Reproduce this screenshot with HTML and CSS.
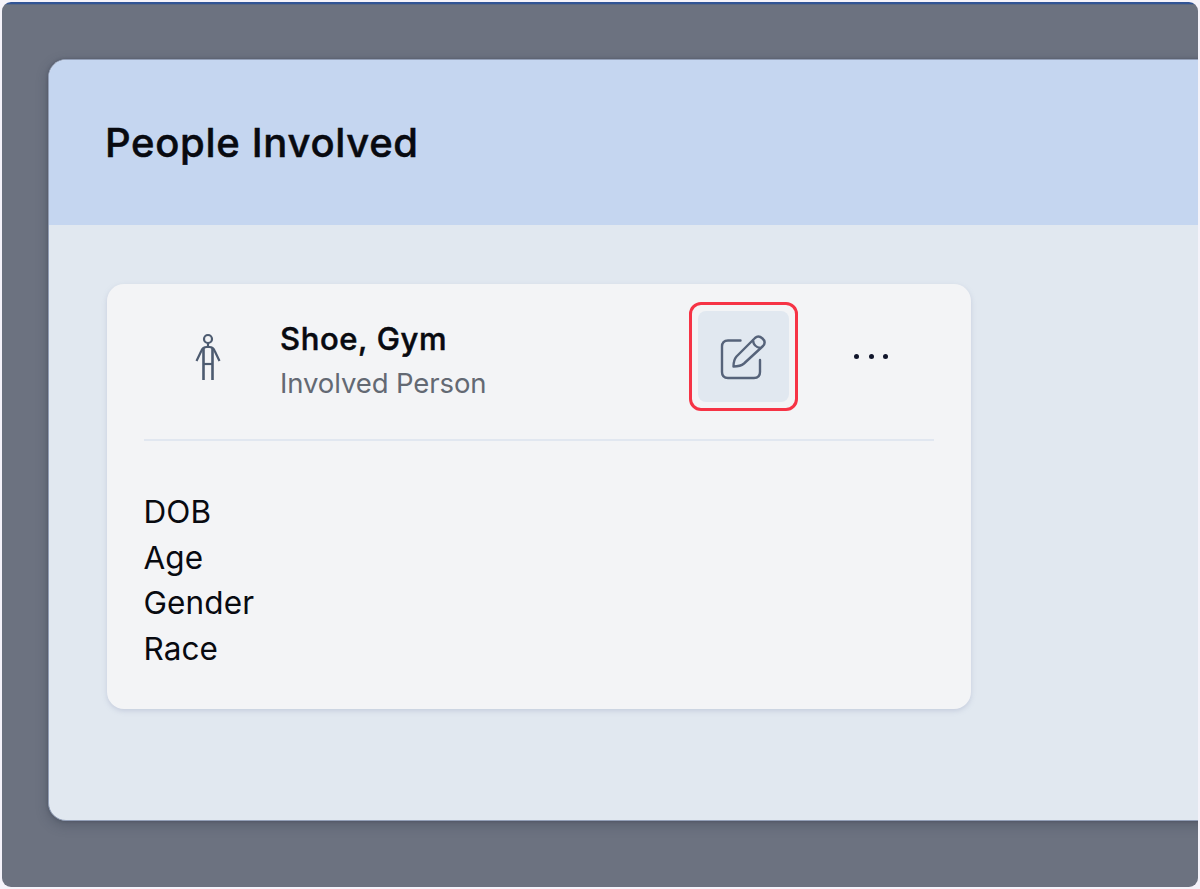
FILE: index.html
```html
<!DOCTYPE html>
<html lang="en">
<head>
<meta charset="utf-8">
<title>People Involved</title>
<link rel="stylesheet" href="styles.css">
</head>
<body>
<main class="backdrop">
  <section class="panel">
    <header class="panel-header"><h1 class="panel-title">People Involved</h1></header>
    <div class="panel-body">
      <article class="card">
        <div class="card-top">
          <svg class="person" viewBox="0 0 30 50" fill="none" stroke="#4d5b70" stroke-width="2.200">
            <circle cx="15" cy="7" r="4"/>
            <path d="M15 11v4M3.500 29 8.500 18.500q1.500-3.500 5-3.500h3q3.500 0 5 3.500l5 10.500"/>
            <path stroke-width="2.600" d="M10.500 16v32M19.500 16v32"/>
            <path d="M10.500 32h9"/>
          </svg>
          <div class="identity">
            <h2 class="name">Shoe, Gym</h2>
            <p class="role">Involved Person</p>
          </div>
          <div class="highlight">
            <button class="edit" aria-label="Edit">
              <svg class="edit-icon" viewBox="0 0 50 50" fill="none" stroke="#56637a" stroke-width="2.400" stroke-linecap="round" stroke-linejoin="round">
                <path d="M23.500 8.500H11q-6 0-6 6V40q0 6 6 6h26q6 0 6-6V28"/>
                <path d="M16.500 34.500q0-6.500 3-10L38 6q3.500-3 7.500.5t.5 7.500L27 31.500q-3.500 3-10.500 3zM36 8q.5 7 7.500 8"/>
              </svg>
            </button>
          </div>
          <button class="more" aria-label="More"><i class="dot"></i><i class="dot"></i><i class="dot"></i></button>
        </div>
        <ul class="details">
          <li class="detail dob">DOB</li>
          <li class="detail age">Age</li>
          <li class="detail gender">Gender</li>
          <li class="detail race">Race</li>
        </ul>
      </article>
    </div>
  </section>
</main>
</body>
</html>
```
FILE: styles.css
```css
* { box-sizing: border-box; }
body { margin: 0; padding: 2px; height: 889px; background: #f5f3fa; font-family: Inter, sans-serif; color: #080a10; overflow: hidden; }
.backdrop { width: 1196px; height: 885px; border-radius: 9px; overflow: hidden; background: linear-gradient(#315495 0 2px, #5a6881 2px 3px, #6c7280 3px); padding: 57px 0 0 46px; }
.panel { width: 1200px; height: 762px; border: 1px solid #939fb7; border-radius: 18px; overflow: hidden; background: #e1e8f0; box-shadow: 0 4px 12px rgba(50,56,72,.35), 0 0 3px rgba(60,66,84,.5); }
.panel-header { height: 165px; padding: 58px 0 0 56px; background: #c5d6f0; }
.panel-title { margin: 0; font-size: 40px; line-height: 49px; font-weight: 500; letter-spacing: .68px; -webkit-text-stroke: .5px currentColor; white-space: nowrap; }
.panel-body { padding: 59px 0 0 57.5px; }
.card { width: 864.5px; height: 425px; padding: 0 37px; border-radius: 17px; background: #f3f4f6; box-shadow: 0 2px 5px rgba(145,155,185,.35); }
.card-top { height: 157px; border-bottom: 2px solid #e1e7f0; display: flex; align-items: flex-start; }
.person { width: 30px; height: 50px; margin: 48px 0 0 49.5px; flex: none; }
.identity { width: 409px; padding: 35px 0 0 57px; }
.name { margin: 0; font-size: 31px; line-height: 39px; font-weight: 500; letter-spacing: .62px; -webkit-text-stroke: .5px currentColor; }
.role { margin: 6px 0 0; font-size: 27.5px; line-height: 38px; letter-spacing: -.1px; color: #636973; }
.highlight { width: 109px; height: 109px; margin: 18px 0 0 57px; padding: 6px; border: 3px solid #f63345; border-radius: 12px; flex: none; }
.edit { width: 91px; height: 91px; padding: 0; border: 0; border-radius: 8px; background: #e1e8f0; display: grid; place-items: center; }
.edit-icon { width: 50px; height: 50px; margin-right: 4px; }
.more { display: flex; gap: 9.5px; border: 0; padding: 0; background: none; margin: 70px 0 0 56px; }
.dot { width: 5px; height: 5px; border-radius: 50%; background: #10152b; }
.details { list-style: none; margin: 0; padding: 48px 0 0; }
.detail { font-size: 31.5px; line-height: 45.5px; letter-spacing: .1px; }
```
